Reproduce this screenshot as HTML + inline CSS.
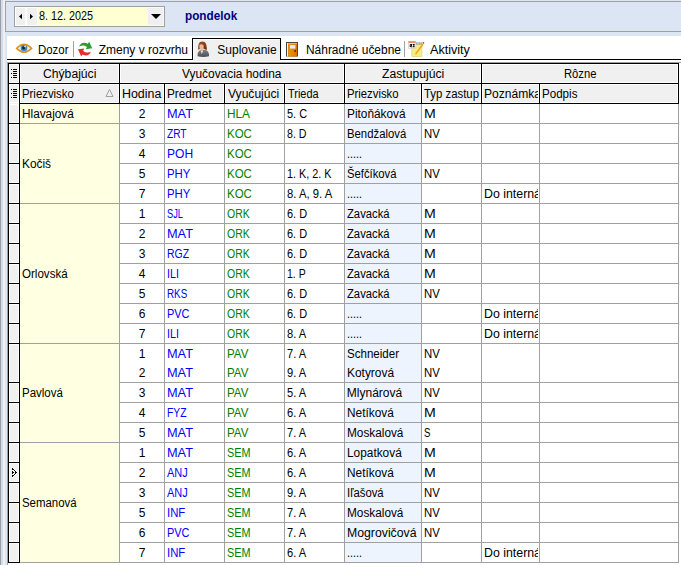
<!DOCTYPE html><html lang="sk"><head><meta charset="utf-8"><title>Suplovanie</title><style>
html,body{margin:0;padding:0;}
body{width:681px;height:565px;overflow:hidden;background:#fff;position:relative;font-family:"Liberation Sans",sans-serif;font-size:12px;color:#000;}
div,span{position:absolute;box-sizing:border-box;white-space:nowrap;}
.t{line-height:19px;height:19px;font-size:12px;margin-top:1px;transform-origin:0 0;}
.c{overflow:hidden;height:19px;margin-top:1px;}
.c .t{margin-top:0;top:0;}
.hc{background:#f0f0f0;border:1px solid #000;box-shadow:inset 1px 1px 0 #fff, inset -1px -1px 0 #fff;}
.gl{background:#a0a0a0;}
.b{color:#0000ff;}
.g{color:#008000;}
svg{position:absolute;overflow:visible;}
</style></head><body>
<div style="left:0;top:0;width:1px;height:565px;background:#9a9ea6"></div>
<div style="left:1px;top:0;width:2px;height:565px;background:#d3dcea"></div>
<div style="left:3px;top:0;width:2px;height:565px;background:#f0f0f0"></div>
<div style="left:5px;top:0;width:2px;height:565px;background:#dbe5f3"></div>
<div style="left:5px;top:0;width:676px;height:36px;background:#dbe5f3"></div>
<div style="left:5px;top:1px;width:690px;height:31px;border:1px solid #a0a0a0;background:#dbe5f3"></div>
<div style="left:14px;top:6px;width:151px;height:21px;border:1px solid #a0a0a0;background:#fff"></div>
<div style="left:16px;top:8px;width:9px;height:17px;background:#f0f0f0"></div>
<div style="left:27px;top:8px;width:10px;height:17px;background:#f0f0f0"></div>
<div style="left:38px;top:7px;width:126px;height:19px;background:#ffffd2"></div>
<div style="left:148px;top:8px;width:15px;height:17px;background:#f0f0f0"></div>
<svg style="left:0;top:0" width="200" height="36"><polygon points="19,16.5 22,13.8 22,19.2" fill="#000"/><polygon points="33,16.5 30,13.8 30,19.2" fill="#000"/><polygon points="151,14 161,14 156,19" fill="#000"/></svg>
<span class="t" style="left:38.93px;top:6px;transform:scaleX(0.9012);">8. 12. 2025</span>
<span class="t" style="left:184.82px;top:6px;font-weight:bold;color:#000080;transform:scaleX(0.9780);">pondelok</span>
<div style="left:7px;top:59px;width:674px;height:1px;background:#000"></div>
<div style="left:192px;top:38px;width:89px;height:22px;background:#f0f0f0;border:1px solid #000;border-bottom:none;box-shadow:inset 1px 1px 0 #fff"></div>
<div style="left:193px;top:59px;width:87px;height:2px;background:#f0f0f0"></div>
<span class="t" style="left:38.25px;top:40px;transform:scaleX(0.9512);">Dozor</span>
<span class="t" style="left:98.70px;top:40px;">Zmeny v rozvrhu</span>
<span class="t" style="left:217.30px;top:40px;">Suplovanie</span>
<span class="t" style="left:305.51px;top:40px;transform:scaleX(0.9947);">Náhradné učebne</span>
<span class="t" style="left:430.20px;top:40px;transform:scaleX(1.0503);">Aktivity</span>
<div style="left:73px;top:41px;width:1px;height:16px;background:#a0a0a0"></div>
<div style="left:404px;top:41px;width:1px;height:16px;background:#a0a0a0"></div>

<svg style="left:0;top:0" width="681" height="62" viewBox="0 0 681 62">
<defs>
<linearGradient id="gh" x1="0" y1="0" x2="0" y2="1"><stop offset="0" stop-color="#9a4a22"/><stop offset="1" stop-color="#6c2c0e"/></linearGradient>
<linearGradient id="gb" x1="0" y1="0" x2="0" y2="1"><stop offset="0" stop-color="#7e8388"/><stop offset="1" stop-color="#4c5054"/></linearGradient>
<linearGradient id="gd" x1="0" y1="0" x2="1" y2="0"><stop offset="0" stop-color="#ee9800"/><stop offset="1" stop-color="#d87200"/></linearGradient>
</defs>
<!-- eye -->
<path d="M16.7,48.4 Q24,40.4 31.5,48.4 Q24,56.2 16.7,48.4 Z" fill="#e3f1fa" stroke="#d9961c" stroke-width="1.6"/>
<circle cx="24" cy="48" r="3.3" fill="#3f86c6"/>
<circle cx="23.6" cy="47.8" r="1.6" fill="#1c2430"/>
<rect x="24.3" y="45.6" width="1.6" height="1.6" fill="#e8f0f8"/>
<!-- refresh arrows -->
<path d="M79.3,46.6 C80,42.6 84.5,41.6 87.8,43.8 L89.2,41.8 L92.2,48.3 L85.8,49.2 L87,47 C84.5,45.2 81.8,45.2 79.3,46.6 Z" fill="#2f9a2f"/>
<path d="M90.8,51.8 C90,55.4 85.8,56.6 82.6,54.6 L81.2,56.4 L78,49.2 L84.2,48.4 L83.2,51 C85.6,52.8 88.4,52.9 90.8,51.8 Z" fill="#e62c2c"/>
<!-- person -->
<path d="M197.6,56.2 C197.2,52.4 198.8,50.2 201.6,49.8 L204.6,49.8 C207.6,50.2 209.4,52.6 209,56.2 C205.5,57.2 201,57.2 197.6,56.2 Z" fill="url(#gb)"/>
<path d="M200.6,50.2 L201.8,54 L203.2,50.2 Z" fill="#f4f4f4"/>
<path d="M198.3,49.6 C198.2,45 198.6,41.5 202.4,41.5 C206.2,41.5 206.6,45 207,49.7 C205.6,50.1 204.4,49.4 204,48.6 L200,48.6 C199.6,49.4 199.1,49.8 198.3,49.6 Z" fill="url(#gh)"/>
<path d="M199.4,44.8 C200.4,44 202.4,44 203.6,45.2 L203.6,47.6 C203.4,49 202.4,50 201.5,50 C200.5,50 199.5,49 199.4,47.6 Z" fill="#f3b78e"/>
<path d="M201,49.6 L202.4,49.6 L202.6,51 L200.8,51 Z" fill="#eaa77c"/>
<!-- door -->
<rect x="286" y="42" width="12" height="14.5" fill="#4a423c"/>
<rect x="287" y="43" width="1.2" height="13.5" fill="#fff6dc"/>
<rect x="288.2" y="43" width="8.8" height="13.5" fill="url(#gd)"/>
<rect x="288.2" y="43" width="8.8" height="1" fill="#f8c040"/>
<rect x="290" y="45" width="5.4" height="3.6" fill="#ece6f2"/>
<circle cx="295.2" cy="51" r="0.9" fill="#3a2a10"/>
<!-- note -->
<rect x="411.8" y="43.8" width="10.2" height="12.8" fill="#f4ee86" stroke="#d8d070" stroke-width="0.6"/>
<rect x="416.4" y="42" width="1" height="3" fill="#8090a8"/><rect x="418.6" y="42" width="1" height="3" fill="#8090a8"/><rect x="420.6" y="42" width="1" height="3" fill="#8090a8"/>
<rect x="408.4" y="41.2" width="7.4" height="7.2" fill="#fff" stroke="#c8c8c8" stroke-width="0.6"/>
<rect x="408.6" y="41.2" width="7" height="1.8" fill="#f08868"/>
<path d="M410.2,46.8 L410.2,44.6 L412,44.4 L410.6,46.8 L412.4,46.8 M413,44.6 L414.4,44.4 L413.2,46.8 L414.8,46.8" stroke="#000" stroke-width="1" fill="none"/>
<path d="M422.4,43.6 L423.6,44.6 L416.6,54 L415.2,54.8 L415.4,53 Z" fill="#f5a21a"/>
<path d="M415.2,54.8 L415.4,53 L416.6,54 Z" fill="#e8b8b0"/>
<circle cx="423.4" cy="42.8" r="0.9" fill="#d03048"/>
</svg>

<div style="left:7px;top:62px;width:674px;height:1px;background:#a0a0a0"></div>
<div style="left:7px;top:62px;width:1px;height:503px;background:#a0a0a0"></div>
<div class="hc" style="left:8px;top:63px;width:12px;height:21px"></div>
<div class="hc" style="left:19px;top:63px;width:101px;height:21px"></div>
<span class="t" style="left:43.10px;top:64px;transform:scaleX(1.0132);">Chýbajúci</span>
<div class="hc" style="left:119px;top:63px;width:226px;height:21px"></div>
<span class="t" style="left:182.31px;top:64px;transform:scaleX(0.9920);">Vyučovacia hodina</span>
<div class="hc" style="left:344px;top:63px;width:138px;height:21px"></div>
<span class="t" style="left:381.50px;top:64px;transform:scaleX(1.0136);">Zastupujúci</span>
<div class="hc" style="left:481px;top:63px;width:198px;height:21px"></div>
<span class="t" style="left:563.86px;top:64px;transform:scaleX(0.9370);">Rôzne</span>
<div class="hc" style="left:8px;top:83px;width:12px;height:21px"></div>
<div class="hc" style="left:19px;top:83px;width:101px;height:21px"></div>
<div class="c" style="left:21px;top:84px;width:97px"><span class="t" style="left:0.75px;transform:scaleX(0.9469);">Priezvisko</span></div>
<div class="hc" style="left:119px;top:83px;width:46px;height:21px"></div>
<div class="c" style="left:121px;top:84px;width:42px"><span class="t" style="left:0.67px;transform:scaleX(1.0337);">Hodina</span></div>
<div class="hc" style="left:164px;top:83px;width:61px;height:21px"></div>
<div class="c" style="left:166px;top:84px;width:57px"><span class="t" style="left:1.02px;transform:scaleX(0.9812);">Predmet</span></div>
<div class="hc" style="left:224px;top:83px;width:61px;height:21px"></div>
<div class="c" style="left:226px;top:84px;width:57px"><span class="t" style="left:1.61px;transform:scaleX(1.0059);">Vyučujúci</span></div>
<div class="hc" style="left:284px;top:83px;width:61px;height:21px"></div>
<div class="c" style="left:286px;top:84px;width:57px"><span class="t" style="left:2.03px;transform:scaleX(0.9090);">Trieda</span></div>
<div class="hc" style="left:344px;top:83px;width:78px;height:21px"></div>
<div class="c" style="left:346px;top:84px;width:74px"><span class="t" style="left:0.86px;transform:scaleX(0.9413);">Priezvisko</span></div>
<div class="hc" style="left:421px;top:83px;width:61px;height:21px"></div>
<div class="c" style="left:423px;top:84px;width:57px"><span class="t" style="left:1.12px;transform:scaleX(0.9481);">Typ zastup</span></div>
<div class="hc" style="left:481px;top:83px;width:59px;height:21px"></div>
<div class="c" style="left:483px;top:84px;width:55px"><span class="t" style="left:0.90px;transform:scaleX(1.0048);">Poznámka</span></div>
<div class="hc" style="left:539px;top:83px;width:140px;height:21px"></div>
<div class="c" style="left:541px;top:84px;width:136px"><span class="t" style="left:1.03px;transform:scaleX(0.9655);">Podpis</span></div>
<svg style="left:0;top:0" width="20" height="120" shape-rendering="crispEdges"><rect x="13" y="69" width="4" height="1" fill="#000"/><rect x="13" y="71" width="4" height="1" fill="#000"/><rect x="13" y="73" width="4" height="1" fill="#000"/><rect x="13" y="75" width="4" height="1" fill="#000"/><rect x="13" y="77" width="4" height="1" fill="#000"/><rect x="11" y="69" width="1" height="1" fill="#000"/><rect x="11" y="73" width="1" height="1" fill="#000"/><rect x="11" y="77" width="1" height="1" fill="#000"/></svg>
<svg style="left:0;top:0" width="20" height="120" shape-rendering="crispEdges"><rect x="13" y="89" width="4" height="1" fill="#000"/><rect x="13" y="91" width="4" height="1" fill="#000"/><rect x="13" y="93" width="4" height="1" fill="#000"/><rect x="13" y="95" width="4" height="1" fill="#000"/><rect x="13" y="97" width="4" height="1" fill="#000"/><rect x="11" y="89" width="1" height="1" fill="#000"/><rect x="11" y="93" width="1" height="1" fill="#000"/><rect x="11" y="97" width="1" height="1" fill="#000"/></svg>
<svg style="left:0;top:0" width="120" height="110"><polygon points="109.5,89.5 113,96.5 106,96.5" fill="none" stroke="#a0a0a0" stroke-width="1"/></svg>
<div style="left:20px;top:104px;width:99px;height:458px;background:#ffffe1"></div>
<div style="left:345px;top:104px;width:76px;height:458px;background:#eef4fd"></div>
<div style="left:8px;top:103px;width:12px;height:460px;background:#f0f0f0;border-left:1px solid #000;border-right:1px solid #000;box-shadow:inset 1px 0 0 #fff,inset -1px 0 0 #fff"></div>
<div style="left:9px;top:122px;width:10px;height:3px;background:#000;border-top:1px solid #fff;border-bottom:1px solid #fff"></div>
<div style="left:9px;top:142px;width:10px;height:3px;background:#000;border-top:1px solid #fff;border-bottom:1px solid #fff"></div>
<div style="left:9px;top:162px;width:10px;height:3px;background:#000;border-top:1px solid #fff;border-bottom:1px solid #fff"></div>
<div style="left:9px;top:182px;width:10px;height:3px;background:#000;border-top:1px solid #fff;border-bottom:1px solid #fff"></div>
<div style="left:9px;top:202px;width:10px;height:3px;background:#000;border-top:1px solid #fff;border-bottom:1px solid #fff"></div>
<div style="left:9px;top:222px;width:10px;height:3px;background:#000;border-top:1px solid #fff;border-bottom:1px solid #fff"></div>
<div style="left:9px;top:242px;width:10px;height:3px;background:#000;border-top:1px solid #fff;border-bottom:1px solid #fff"></div>
<div style="left:9px;top:262px;width:10px;height:3px;background:#000;border-top:1px solid #fff;border-bottom:1px solid #fff"></div>
<div style="left:9px;top:282px;width:10px;height:3px;background:#000;border-top:1px solid #fff;border-bottom:1px solid #fff"></div>
<div style="left:9px;top:302px;width:10px;height:3px;background:#000;border-top:1px solid #fff;border-bottom:1px solid #fff"></div>
<div style="left:9px;top:322px;width:10px;height:3px;background:#000;border-top:1px solid #fff;border-bottom:1px solid #fff"></div>
<div style="left:9px;top:342px;width:10px;height:3px;background:#000;border-top:1px solid #fff;border-bottom:1px solid #fff"></div>
<div style="left:9px;top:381px;width:10px;height:3px;background:#000;border-top:1px solid #fff;border-bottom:1px solid #fff"></div>
<div style="left:9px;top:401px;width:10px;height:3px;background:#000;border-top:1px solid #fff;border-bottom:1px solid #fff"></div>
<div style="left:9px;top:421px;width:10px;height:3px;background:#000;border-top:1px solid #fff;border-bottom:1px solid #fff"></div>
<div style="left:9px;top:441px;width:10px;height:3px;background:#000;border-top:1px solid #fff;border-bottom:1px solid #fff"></div>
<div style="left:9px;top:461px;width:10px;height:3px;background:#000;border-top:1px solid #fff;border-bottom:1px solid #fff"></div>
<div style="left:9px;top:481px;width:10px;height:3px;background:#000;border-top:1px solid #fff;border-bottom:1px solid #fff"></div>
<div style="left:9px;top:501px;width:10px;height:3px;background:#000;border-top:1px solid #fff;border-bottom:1px solid #fff"></div>
<div style="left:9px;top:521px;width:10px;height:3px;background:#000;border-top:1px solid #fff;border-bottom:1px solid #fff"></div>
<div style="left:9px;top:541px;width:10px;height:3px;background:#000;border-top:1px solid #fff;border-bottom:1px solid #fff"></div>
<div style="left:9px;top:561px;width:10px;height:3px;background:#000;border-top:1px solid #fff;border-bottom:1px solid #fff"></div>
<div class="gl" style="left:119px;top:104px;width:1px;height:459px"></div>
<div class="gl" style="left:164px;top:104px;width:1px;height:459px"></div>
<div class="gl" style="left:224px;top:104px;width:1px;height:459px"></div>
<div class="gl" style="left:284px;top:104px;width:1px;height:459px"></div>
<div class="gl" style="left:344px;top:104px;width:1px;height:459px"></div>
<div class="gl" style="left:421px;top:104px;width:1px;height:459px"></div>
<div class="gl" style="left:481px;top:104px;width:1px;height:459px"></div>
<div class="gl" style="left:539px;top:104px;width:1px;height:459px"></div>
<div class="gl" style="left:678px;top:104px;width:1px;height:459px"></div>
<div class="gl" style="left:20px;top:123px;width:659px;height:1px"></div>
<div class="gl" style="left:120px;top:143px;width:559px;height:1px"></div>
<div class="gl" style="left:120px;top:163px;width:559px;height:1px"></div>
<div class="gl" style="left:120px;top:183px;width:559px;height:1px"></div>
<div class="gl" style="left:20px;top:203px;width:659px;height:1px"></div>
<div class="gl" style="left:120px;top:223px;width:559px;height:1px"></div>
<div class="gl" style="left:120px;top:243px;width:559px;height:1px"></div>
<div class="gl" style="left:120px;top:263px;width:559px;height:1px"></div>
<div class="gl" style="left:120px;top:283px;width:559px;height:1px"></div>
<div class="gl" style="left:120px;top:303px;width:559px;height:1px"></div>
<div class="gl" style="left:120px;top:323px;width:559px;height:1px"></div>
<div class="gl" style="left:20px;top:343px;width:659px;height:1px"></div>
<div class="gl" style="left:120px;top:382px;width:559px;height:1px"></div>
<div class="gl" style="left:120px;top:402px;width:559px;height:1px"></div>
<div class="gl" style="left:120px;top:422px;width:559px;height:1px"></div>
<div class="gl" style="left:20px;top:442px;width:659px;height:1px"></div>
<div class="gl" style="left:120px;top:462px;width:559px;height:1px"></div>
<div class="gl" style="left:120px;top:482px;width:559px;height:1px"></div>
<div class="gl" style="left:120px;top:502px;width:559px;height:1px"></div>
<div class="gl" style="left:120px;top:522px;width:559px;height:1px"></div>
<div class="gl" style="left:120px;top:542px;width:559px;height:1px"></div>
<div class="gl" style="left:20px;top:562px;width:659px;height:1px"></div>
<div style="left:8px;top:563px;width:673px;height:2px;background:#fff"></div>
<span class="t" style="left:21.92px;top:104px;transform:scaleX(0.9838);">Hlavajová</span>
<span class="t" style="left:21.61px;top:154px;transform:scaleX(0.9900);">Kočiš</span>
<span class="t" style="left:22.29px;top:264px;transform:scaleX(0.9641);">Orlovská</span>
<span class="t" style="left:21.84px;top:383px;transform:scaleX(0.9583);">Pavlová</span>
<span class="t" style="left:21.95px;top:493px;transform:scaleX(0.9519);">Semanová</span>
<span class="t" style="left:120px;top:104px;width:44px;text-align:center">2</span>
<span class="t b" style="left:166.84px;top:104px;transform:scaleX(1.0609);">MAT</span>
<span class="t g" style="left:227.01px;top:104px;transform:scaleX(0.9851);">HLA</span>
<span class="t" style="left:287.18px;top:104px;transform:scaleX(0.9104);">5. C</span>
<span class="t" style="left:346.81px;top:104px;transform:scaleX(0.9861);">Pitoňáková</span>
<span class="t" style="left:423.72px;top:104px;transform:scaleX(1.1750);">M</span>
<span class="t" style="left:120px;top:124px;width:44px;text-align:center">3</span>
<span class="t b" style="left:167.35px;top:124px;transform:scaleX(0.8459);">ZRT</span>
<span class="t g" style="left:226.65px;top:124px;transform:scaleX(0.9542);">KOC</span>
<span class="t" style="left:287.34px;top:124px;transform:scaleX(0.8866);">8. D</span>
<span class="t" style="left:346.86px;top:124px;transform:scaleX(0.9443);">Bendžalová</span>
<span class="t" style="left:423.75px;top:124px;transform:scaleX(0.9481);">NV</span>
<span class="t" style="left:120px;top:144px;width:44px;text-align:center">4</span>
<span class="t b" style="left:166.90px;top:144px;transform:scaleX(1.0042);">POH</span>
<span class="t g" style="left:226.65px;top:144px;transform:scaleX(0.9542);">KOC</span>
<span class="t" style="left:347.01px;top:144px;transform:scaleX(0.9010);">.....</span>
<span class="t" style="left:120px;top:164px;width:44px;text-align:center">5</span>
<span class="t b" style="left:166.95px;top:164px;transform:scaleX(0.9454);">PHY</span>
<span class="t g" style="left:226.65px;top:164px;transform:scaleX(0.9542);">KOC</span>
<span class="t" style="left:287.30px;top:164px;transform:scaleX(0.9002);">1. K, 2. K</span>
<span class="t" style="left:346.66px;top:164px;transform:scaleX(0.9373);">Šefčíková</span>
<span class="t" style="left:423.75px;top:164px;transform:scaleX(0.9481);">NV</span>
<span class="t" style="left:120px;top:184px;width:44px;text-align:center">7</span>
<span class="t b" style="left:166.95px;top:184px;transform:scaleX(0.9454);">PHY</span>
<span class="t g" style="left:226.65px;top:184px;transform:scaleX(0.9542);">KOC</span>
<span class="t" style="left:287.31px;top:184px;transform:scaleX(0.9413);">8. A, 9. A</span>
<span class="t" style="left:347.01px;top:184px;transform:scaleX(0.9010);">.....</span>
<div class="c" style="left:483px;top:184px;width:55px"><span class="t" style="left:0.57px;transform:scaleX(1.0291);">Do interná</span></div>
<span class="t" style="left:120px;top:204px;width:44px;text-align:center">1</span>
<span class="t b" style="left:166.83px;top:204px;transform:scaleX(0.7708);">SJL</span>
<span class="t g" style="left:227.14px;top:204px;transform:scaleX(0.8725);">ORK</span>
<span class="t" style="left:287.06px;top:204px;transform:scaleX(0.9137);">6. D</span>
<span class="t" style="left:347.22px;top:204px;transform:scaleX(0.9376);">Zavacká</span>
<span class="t" style="left:423.72px;top:204px;transform:scaleX(1.1750);">M</span>
<span class="t" style="left:120px;top:224px;width:44px;text-align:center">2</span>
<span class="t b" style="left:166.84px;top:224px;transform:scaleX(1.0609);">MAT</span>
<span class="t g" style="left:227.14px;top:224px;transform:scaleX(0.8725);">ORK</span>
<span class="t" style="left:287.06px;top:224px;transform:scaleX(0.9137);">6. D</span>
<span class="t" style="left:347.22px;top:224px;transform:scaleX(0.9376);">Zavacká</span>
<span class="t" style="left:423.72px;top:224px;transform:scaleX(1.1750);">M</span>
<span class="t" style="left:120px;top:244px;width:44px;text-align:center">3</span>
<span class="t b" style="left:167.03px;top:244px;transform:scaleX(0.8708);">RGZ</span>
<span class="t g" style="left:227.14px;top:244px;transform:scaleX(0.8725);">ORK</span>
<span class="t" style="left:287.06px;top:244px;transform:scaleX(0.9137);">6. D</span>
<span class="t" style="left:347.22px;top:244px;transform:scaleX(0.9376);">Zavacká</span>
<span class="t" style="left:423.72px;top:244px;transform:scaleX(1.1750);">M</span>
<span class="t" style="left:120px;top:264px;width:44px;text-align:center">4</span>
<span class="t b" style="left:167.12px;top:264px;transform:scaleX(0.8939);">ILI</span>
<span class="t g" style="left:227.14px;top:264px;transform:scaleX(0.8725);">ORK</span>
<span class="t" style="left:287.32px;top:264px;transform:scaleX(0.8771);">1. P</span>
<span class="t" style="left:347.22px;top:264px;transform:scaleX(0.9376);">Zavacká</span>
<span class="t" style="left:423.72px;top:264px;transform:scaleX(1.1750);">M</span>
<span class="t" style="left:120px;top:284px;width:44px;text-align:center">5</span>
<span class="t b" style="left:167.08px;top:284px;transform:scaleX(0.8179);">RKS</span>
<span class="t g" style="left:227.14px;top:284px;transform:scaleX(0.8725);">ORK</span>
<span class="t" style="left:287.06px;top:284px;transform:scaleX(0.9137);">6. D</span>
<span class="t" style="left:347.22px;top:284px;transform:scaleX(0.9376);">Zavacká</span>
<span class="t" style="left:423.75px;top:284px;transform:scaleX(0.9481);">NV</span>
<span class="t" style="left:120px;top:304px;width:44px;text-align:center">6</span>
<span class="t b" style="left:166.99px;top:304px;transform:scaleX(0.9131);">PVC</span>
<span class="t g" style="left:227.14px;top:304px;transform:scaleX(0.8725);">ORK</span>
<span class="t" style="left:287.06px;top:304px;transform:scaleX(0.9137);">6. D</span>
<span class="t" style="left:347.01px;top:304px;transform:scaleX(0.9010);">.....</span>
<div class="c" style="left:483px;top:304px;width:55px"><span class="t" style="left:0.57px;transform:scaleX(1.0291);">Do interná</span></div>
<span class="t" style="left:120px;top:324px;width:44px;text-align:center">7</span>
<span class="t b" style="left:167.12px;top:324px;transform:scaleX(0.8939);">ILI</span>
<span class="t g" style="left:227.14px;top:324px;transform:scaleX(0.8725);">ORK</span>
<span class="t" style="left:287.12px;top:324px;transform:scaleX(0.9260);">8. A</span>
<span class="t" style="left:347.01px;top:324px;transform:scaleX(0.9010);">.....</span>
<div class="c" style="left:483px;top:324px;width:55px"><span class="t" style="left:0.57px;transform:scaleX(1.0291);">Do interná</span></div>
<span class="t" style="left:120px;top:344px;width:44px;text-align:center">1</span>
<span class="t b" style="left:166.84px;top:344px;transform:scaleX(1.0609);">MAT</span>
<span class="t g" style="left:226.94px;top:344px;transform:scaleX(0.9583);">PAV</span>
<span class="t" style="left:287.29px;top:344px;transform:scaleX(0.9178);">7. A</span>
<span class="t" style="left:346.64px;top:344px;transform:scaleX(0.9639);">Schneider</span>
<span class="t" style="left:423.75px;top:344px;transform:scaleX(0.9481);">NV</span>
<span class="t" style="left:120px;top:363px;width:44px;text-align:center">2</span>
<span class="t b" style="left:166.84px;top:363px;transform:scaleX(1.0609);">MAT</span>
<span class="t g" style="left:226.94px;top:363px;transform:scaleX(0.9583);">PAV</span>
<span class="t" style="left:287.05px;top:363px;transform:scaleX(0.9294);">9. A</span>
<span class="t" style="left:346.81px;top:363px;transform:scaleX(0.9932);">Kotyrová</span>
<span class="t" style="left:423.75px;top:363px;transform:scaleX(0.9481);">NV</span>
<span class="t" style="left:120px;top:383px;width:44px;text-align:center">3</span>
<span class="t b" style="left:166.84px;top:383px;transform:scaleX(1.0609);">MAT</span>
<span class="t g" style="left:226.94px;top:383px;transform:scaleX(0.9583);">PAV</span>
<span class="t" style="left:287.17px;top:383px;transform:scaleX(0.9234);">5. A</span>
<span class="t" style="left:346.80px;top:383px;">Mlynárová</span>
<span class="t" style="left:423.75px;top:383px;transform:scaleX(0.9481);">NV</span>
<span class="t" style="left:120px;top:403px;width:44px;text-align:center">4</span>
<span class="t b" style="left:167.04px;top:403px;transform:scaleX(0.8604);">FYZ</span>
<span class="t g" style="left:226.94px;top:403px;transform:scaleX(0.9583);">PAV</span>
<span class="t" style="left:287.05px;top:403px;transform:scaleX(0.9294);">6. A</span>
<span class="t" style="left:346.81px;top:403px;transform:scaleX(0.9868);">Netíková</span>
<span class="t" style="left:423.72px;top:403px;transform:scaleX(1.1750);">M</span>
<span class="t" style="left:120px;top:423px;width:44px;text-align:center">5</span>
<span class="t b" style="left:166.84px;top:423px;transform:scaleX(1.0609);">MAT</span>
<span class="t g" style="left:226.94px;top:423px;transform:scaleX(0.9583);">PAV</span>
<span class="t" style="left:287.29px;top:423px;transform:scaleX(0.9178);">7. A</span>
<span class="t" style="left:346.82px;top:423px;transform:scaleX(0.9838);">Moskalová</span>
<span class="t" style="left:424.00px;top:423px;transform:scaleX(0.8027);">S</span>
<span class="t" style="left:120px;top:443px;width:44px;text-align:center">1</span>
<span class="t b" style="left:166.84px;top:443px;transform:scaleX(1.0609);">MAT</span>
<span class="t g" style="left:226.70px;top:443px;transform:scaleX(0.9042);">SEM</span>
<span class="t" style="left:287.05px;top:443px;transform:scaleX(0.9294);">6. A</span>
<span class="t" style="left:346.81px;top:443px;transform:scaleX(0.9887);">Lopatková</span>
<span class="t" style="left:423.72px;top:443px;transform:scaleX(1.1750);">M</span>
<span class="t" style="left:120px;top:463px;width:44px;text-align:center">2</span>
<span class="t b" style="left:167.33px;top:463px;transform:scaleX(0.9168);">ANJ</span>
<span class="t g" style="left:226.70px;top:463px;transform:scaleX(0.9042);">SEM</span>
<span class="t" style="left:287.05px;top:463px;transform:scaleX(0.9294);">6. A</span>
<span class="t" style="left:346.81px;top:463px;transform:scaleX(0.9868);">Netíková</span>
<span class="t" style="left:423.72px;top:463px;transform:scaleX(1.1750);">M</span>
<span class="t" style="left:120px;top:483px;width:44px;text-align:center">3</span>
<span class="t b" style="left:167.33px;top:483px;transform:scaleX(0.9168);">ANJ</span>
<span class="t g" style="left:226.70px;top:483px;transform:scaleX(0.9042);">SEM</span>
<span class="t" style="left:287.05px;top:483px;transform:scaleX(0.9294);">9. A</span>
<span class="t" style="left:346.96px;top:483px;transform:scaleX(0.9429);">Iľašová</span>
<span class="t" style="left:423.75px;top:483px;transform:scaleX(0.9481);">NV</span>
<span class="t" style="left:120px;top:503px;width:44px;text-align:center">5</span>
<span class="t b" style="left:167.06px;top:503px;transform:scaleX(0.9442);">INF</span>
<span class="t g" style="left:226.70px;top:503px;transform:scaleX(0.9042);">SEM</span>
<span class="t" style="left:287.29px;top:503px;transform:scaleX(0.9178);">7. A</span>
<span class="t" style="left:346.82px;top:503px;transform:scaleX(0.9838);">Moskalová</span>
<span class="t" style="left:423.75px;top:503px;transform:scaleX(0.9481);">NV</span>
<span class="t" style="left:120px;top:523px;width:44px;text-align:center">6</span>
<span class="t b" style="left:166.99px;top:523px;transform:scaleX(0.9131);">PVC</span>
<span class="t g" style="left:226.70px;top:523px;transform:scaleX(0.9042);">SEM</span>
<span class="t" style="left:287.29px;top:523px;transform:scaleX(0.9178);">7. A</span>
<span class="t" style="left:346.78px;top:523px;transform:scaleX(1.0216);">Mogrovičová</span>
<span class="t" style="left:423.75px;top:523px;transform:scaleX(0.9481);">NV</span>
<span class="t" style="left:120px;top:543px;width:44px;text-align:center">7</span>
<span class="t b" style="left:167.06px;top:543px;transform:scaleX(0.9442);">INF</span>
<span class="t g" style="left:226.70px;top:543px;transform:scaleX(0.9042);">SEM</span>
<span class="t" style="left:287.05px;top:543px;transform:scaleX(0.9294);">6. A</span>
<span class="t" style="left:347.01px;top:543px;transform:scaleX(0.9010);">.....</span>
<div class="c" style="left:483px;top:543px;width:55px"><span class="t" style="left:0.57px;transform:scaleX(1.0291);">Do interná</span></div>
<svg style="left:0;top:0" width="20" height="565" shape-rendering="crispEdges"><rect x="13" y="468" width="1" height="1" fill="#fff"/><rect x="14" y="469" width="1" height="1" fill="#fff"/><rect x="15" y="470" width="1" height="1" fill="#fff"/><rect x="16" y="471" width="1" height="1" fill="#fff"/><rect x="16" y="473" width="1" height="1" fill="#fff"/><rect x="15" y="474" width="1" height="1" fill="#fff"/><rect x="14" y="475" width="1" height="1" fill="#fff"/><rect x="13" y="476" width="1" height="1" fill="#fff"/><rect x="12" y="468" width="1" height="1" fill="#000"/><rect x="12" y="469" width="1" height="1" fill="#000"/><rect x="13" y="469" width="1" height="1" fill="#000"/><rect x="14" y="470" width="1" height="1" fill="#000"/><rect x="12" y="471" width="1" height="1" fill="#000"/><rect x="15" y="471" width="1" height="1" fill="#000"/><rect x="12" y="472" width="1" height="1" fill="#000"/><rect x="13" y="472" width="1" height="1" fill="#000"/><rect x="15" y="472" width="1" height="1" fill="#000"/><rect x="16" y="472" width="1" height="1" fill="#000"/><rect x="12" y="473" width="1" height="1" fill="#000"/><rect x="15" y="473" width="1" height="1" fill="#000"/><rect x="14" y="474" width="1" height="1" fill="#000"/><rect x="12" y="475" width="1" height="1" fill="#000"/><rect x="13" y="475" width="1" height="1" fill="#000"/><rect x="12" y="476" width="1" height="1" fill="#000"/></svg>
<div style="left:9px;top:104px;width:10px;height:1px;background:#fff"></div>
</body></html>
